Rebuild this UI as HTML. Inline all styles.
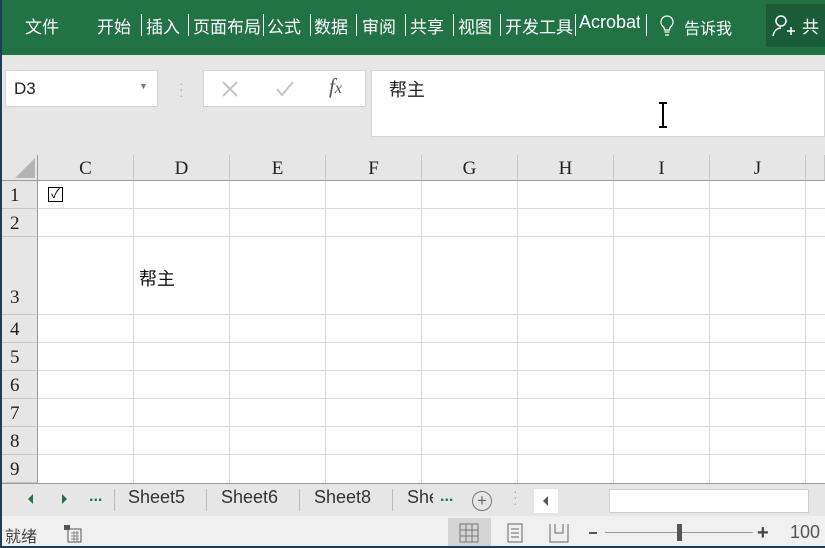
<!DOCTYPE html>
<html><head><meta charset="utf-8"><style>
*{margin:0;padding:0;box-sizing:border-box}
body{width:825px;height:548px;overflow:hidden;background:#e6e6e6;position:relative;font-family:"Liberation Sans","Noto Sans CJK SC",sans-serif}
.a{position:absolute}
#rib{left:0;top:0;width:825px;height:55px;background:#217346;color:#fff;font-size:17px}
#rib span{position:absolute;top:13px;white-space:nowrap}
.sep{position:absolute;top:14px;width:1px;height:22px;background:#fff}
.ser{font-family:"Liberation Serif","Noto Serif CJK SC",serif}
.col{position:absolute;top:155px;height:26px;background:#e6e6e6;border-right:1px solid #c6c6c6;border-bottom:1px solid #9b9b9b;text-align:center;font-size:19px;line-height:28px;color:#222}
.row{position:absolute;left:0;width:38px;background:#e6e6e6;border-bottom:1px solid #c6c6c6;border-right:1px solid #9b9b9b;font-size:19px;color:#222;padding-left:10px}
.vl{position:absolute;top:181px;height:302px;width:1px;background:#dadada}
.hl{position:absolute;left:38px;width:787px;height:1px;background:#dadada}
</style></head><body>
<div id="rib" class="a">
<span style="left:25px">文件</span>
<span style="left:97px">开始</span><div class="sep" style="left:141px"></div>
<span style="left:146px">插入</span><div class="sep" style="left:188px"></div>
<span style="left:193px;width:68px;overflow:hidden">页面布局</span><div class="sep" style="left:263px"></div>
<span style="left:267px">公式</span><div class="sep" style="left:310px"></div>
<span style="left:314px">数据</span><div class="sep" style="left:356px"></div>
<span style="left:362px">审阅</span><div class="sep" style="left:405px"></div>
<span style="left:410px">共享</span><div class="sep" style="left:453px"></div>
<span style="left:458px">视图</span><div class="sep" style="left:500px"></div>
<span style="left:505px;width:68px;overflow:hidden">开发工具</span><div class="sep" style="left:575px"></div>
<span style="left:579px;width:61px;overflow:hidden;font-size:18px;top:12px">Acrobat</span><div class="sep" style="left:646px"></div>
<svg class="a" style="left:659px;top:14px" width="16" height="24" viewBox="0 0 16 24"><path d="M8 2a6 6 0 0 0-4 10.5c1 1 1.5 2 1.5 3.5h5c0-1.5.5-2.5 1.5-3.5A6 6 0 0 0 8 2zM5.5 18h5M6 21h4" stroke="#fff" stroke-width="1.3" fill="none"/></svg>
<span style="left:684px;font-size:16px;top:15px">告诉我</span>
<div class="a" style="left:766px;top:4px;width:59px;height:43px;background:#1b5c38"></div>
<svg class="a" style="left:772px;top:14px" width="24" height="24" viewBox="0 0 24 24"><circle cx="9" cy="7" r="5" stroke="#fff" stroke-width="1.5" fill="none"/><path d="M1 22c1-5 4-8 8-8M15 17h8M19 13v8" stroke="#fff" stroke-width="1.5" fill="none"/></svg>
<span style="left:802px">共</span>
</div>
<div class="a" style="left:5px;top:70px;width:153px;height:37px;background:#fff;border:1px solid #d4d4d4;font-size:17px;padding:8px 0 0 8px;color:#222">D3<span class="a" style="left:133px;top:10px;font-size:9px;color:#777">▼</span></div>
<div class="a" style="left:179px;top:80px;color:#aaa;font-size:14px;line-height:6px">·<br>·<br>·</div>
<div class="a" style="left:203px;top:70px;width:163px;height:37px;background:#fff;border:1px solid #d4d4d4"></div>
<svg class="a" style="left:220px;top:80px" width="20" height="18"><path d="M3 2l14 14M17 2L3 16" stroke="#c4c4c4" stroke-width="2"/></svg>
<svg class="a" style="left:274px;top:80px" width="22" height="18"><path d="M3 9l5 6L19 2" stroke="#c4c4c4" stroke-width="2" fill="none"/></svg>
<div class="a ser" style="left:329px;top:74px;font-size:21px;font-style:italic;color:#555">f<span style="font-size:16px">x</span></div>
<div class="a" style="left:371px;top:70px;width:454px;height:67px;background:#fff;border:1px solid #d4d4d4;font-size:18px;padding:5px 0 0 17px;color:#222">帮主</div>
<svg class="a" style="left:656px;top:102px" width="14" height="26"><path d="M3 1h8M7 1v24M3 25h8" stroke="#000" stroke-width="2"/></svg>
<div class="a" style="left:0;top:155px;width:38px;height:26px;background:#e6e6e6;border-right:1px solid #9b9b9b;border-bottom:1px solid #9b9b9b"></div>
<svg class="a" style="left:15px;top:158px" width="21" height="21"><path d="M20 0V20H0Z" fill="#b5b5b5"/></svg>
<div class="a" style="left:38px;top:181px;width:787px;height:302px;background:#fff"></div>
<div class="col ser" style="left:38px;width:96px">C</div>
<div class="col ser" style="left:134px;width:96px">D</div>
<div class="col ser" style="left:230px;width:96px">E</div>
<div class="col ser" style="left:326px;width:96px">F</div>
<div class="col ser" style="left:422px;width:96px">G</div>
<div class="col ser" style="left:518px;width:96px">H</div>
<div class="col ser" style="left:614px;width:96px">I</div>
<div class="col ser" style="left:710px;width:96px">J</div>
<div class="col ser" style="left:806px;width:19px"></div>
<div class="vl" style="left:133px"></div><div class="vl" style="left:229px"></div><div class="vl" style="left:325px"></div><div class="vl" style="left:421px"></div><div class="vl" style="left:517px"></div><div class="vl" style="left:613px"></div><div class="vl" style="left:709px"></div><div class="vl" style="left:805px"></div>
<div class="hl" style="top:208px"></div><div class="hl" style="top:236px"></div><div class="hl" style="top:314px"></div><div class="hl" style="top:342px"></div><div class="hl" style="top:370px"></div><div class="hl" style="top:398px"></div><div class="hl" style="top:426px"></div><div class="hl" style="top:454px"></div>
<div class="row ser" style="top:181px;height:28px;line-height:30px">1</div>
<div class="row ser" style="top:209px;height:28px;line-height:30px">2</div>
<div class="row ser" style="top:237px;height:78px;padding-top:50px">3</div>
<div class="row ser" style="top:315px;height:28px;line-height:30px">4</div>
<div class="row ser" style="top:343px;height:28px;line-height:30px">5</div>
<div class="row ser" style="top:371px;height:28px;line-height:30px">6</div>
<div class="row ser" style="top:399px;height:28px;line-height:30px">7</div>
<div class="row ser" style="top:427px;height:28px;line-height:30px">8</div>
<div class="row ser" style="top:455px;height:28px;line-height:30px">9</div>
<div class="a" style="left:48px;top:187px;width:15px;height:15px;border:1px solid #000;font-size:13px;line-height:12px;text-align:center">✓</div>
<div class="a" style="left:139px;top:265px;font-size:18px;color:#111">帮主</div>
<div class="a" style="left:0;top:483px;width:825px;height:33px;background:#e6e6e6;border-top:1px solid #9b9b9b"></div>
<div class="a" style="left:28px;top:494px;width:0;height:0;border:5px solid transparent;border-right:5px solid #217346;border-left:0"></div>
<div class="a" style="left:62px;top:494px;width:0;height:0;border:5px solid transparent;border-left:5px solid #217346;border-right:0"></div>
<div class="a" style="left:89px;top:488px;color:#217346;font-weight:bold;font-size:16px">...</div>
<div class="a" style="left:114px;top:489px;width:1px;height:22px;background:#bbb"></div>
<div class="a" style="left:128px;top:487px;font-size:18px;color:#333">Sheet5</div>
<div class="a" style="left:206px;top:489px;width:1px;height:22px;background:#bbb"></div>
<div class="a" style="left:221px;top:487px;font-size:18px;color:#333">Sheet6</div>
<div class="a" style="left:299px;top:489px;width:1px;height:22px;background:#bbb"></div>
<div class="a" style="left:314px;top:487px;font-size:18px;color:#333">Sheet8</div>
<div class="a" style="left:392px;top:489px;width:1px;height:22px;background:#bbb"></div>
<div class="a" style="left:407px;top:487px;font-size:18px;color:#333;width:26px;overflow:hidden">Sheet</div>
<div class="a" style="left:440px;top:488px;color:#217346;font-weight:bold;font-size:16px">...</div>
<div class="a" style="left:472px;top:491px;width:20px;height:20px;border:1.5px solid #777;border-radius:50%;text-align:center;line-height:17px;font-size:17px;color:#666">+</div>
<div class="a" style="left:513px;top:488px;color:#aaa;font-size:14px;line-height:6px">·<br>·<br>·</div>
<div class="a" style="left:534px;top:489px;width:24px;height:24px;background:#fff"></div>
<div class="a" style="left:543px;top:496px;width:0;height:0;border:5px solid transparent;border-right:5px solid #555;border-left:0"></div>
<div class="a" style="left:609px;top:489px;width:200px;height:24px;background:#fff;border:1px solid #ccc"></div>
<div class="a" style="left:0;top:516px;width:825px;height:32px;background:#f0f0f0"></div>
<div class="a" style="left:5px;top:523px;font-size:16px;color:#444">就绪</div>
<svg class="a" style="left:63px;top:524px" width="20" height="20"><rect x="1" y="1" width="6" height="5" fill="#555"/><rect x="5" y="5" width="13" height="13" fill="none" stroke="#555"/><path d="M8 9h8M8 12h8M8 15h8M11 7v11M14 7v11" stroke="#888"/></svg>
<div class="a" style="left:448px;top:518px;width:43px;height:30px;background:#d4d4d4"></div>
<svg class="a" style="left:459px;top:523px" width="20" height="20"><rect x="1" y="1" width="18" height="18" fill="none" stroke="#777"/><path d="M7 1v18M13 1v18M1 7h18M1 13h18" stroke="#777"/></svg>
<svg class="a" style="left:505px;top:523px" width="20" height="20"><rect x="3" y="1" width="14" height="18" fill="none" stroke="#666"/><path d="M6 6h8M6 10h8M6 14h8" stroke="#666"/></svg>
<svg class="a" style="left:549px;top:523px" width="20" height="20"><path d="M1 1v18h18V1M6 1v9h8V1" fill="none" stroke="#666"/></svg>
<div class="a" style="left:589px;top:532px;width:8px;height:2px;background:#555"></div>
<div class="a" style="left:605px;top:532px;width:148px;height:1px;background:#999"></div>
<div class="a" style="left:677px;top:524px;width:5px;height:17px;background:#555"></div>
<div class="a" style="left:757px;top:523px;font-size:20px;color:#444;font-weight:bold;line-height:20px">+</div>
<div class="a" style="left:790px;top:522px;font-size:18px;color:#555">100</div>
<div class="a" style="left:0;top:0;width:2px;height:548px;background:#1c3d5c"></div>
<div class="a" style="left:0;top:546px;width:825px;height:2px;background:#1c3d5c"></div>
</body></html>
